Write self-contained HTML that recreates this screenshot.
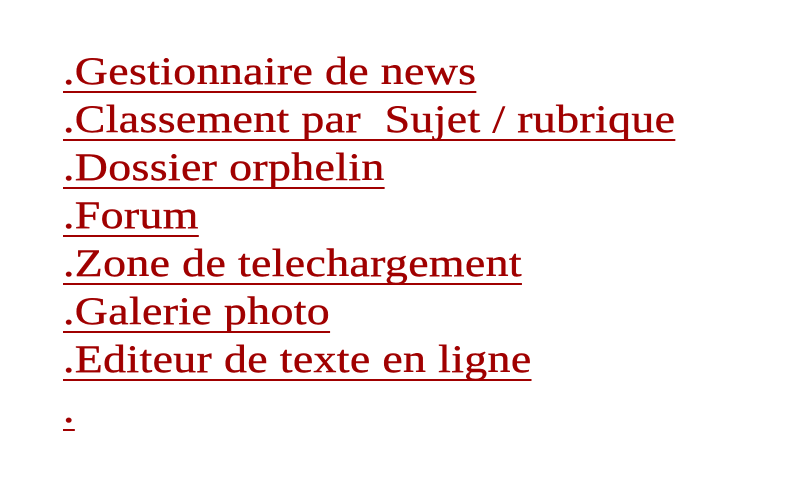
<!DOCTYPE html>
<html><head><style>
body{margin:0;background:#fff;width:800px;height:500px;overflow:hidden}
.w{position:absolute;left:63px;top:0;transform:scaleX(1.175);transform-origin:0 0}
a{position:absolute;left:0;white-space:pre;color:#a00000;font-family:"Liberation Serif",serif;font-size:39px;letter-spacing:0.3px;text-decoration:underline;text-decoration-thickness:2px;text-underline-offset:7px;text-decoration-skip-ink:none;-webkit-text-stroke:0.4px #a00000;line-height:1}
</style></head><body><div class="w">
<a style="top:52px">.Gestionnaire de news</a>
<a style="top:100px">.Classement par  Sujet / rubrique</a>
<a style="top:148px">.Dossier orphelin</a>
<a style="top:196px">.Forum</a>
<a style="top:244px">.Zone de telechargement</a>
<a style="top:292px">.Galerie photo</a>
<a style="top:340px">.Editeur de texte en ligne</a>
<a style="top:390px">.</a>
</div></body></html>
